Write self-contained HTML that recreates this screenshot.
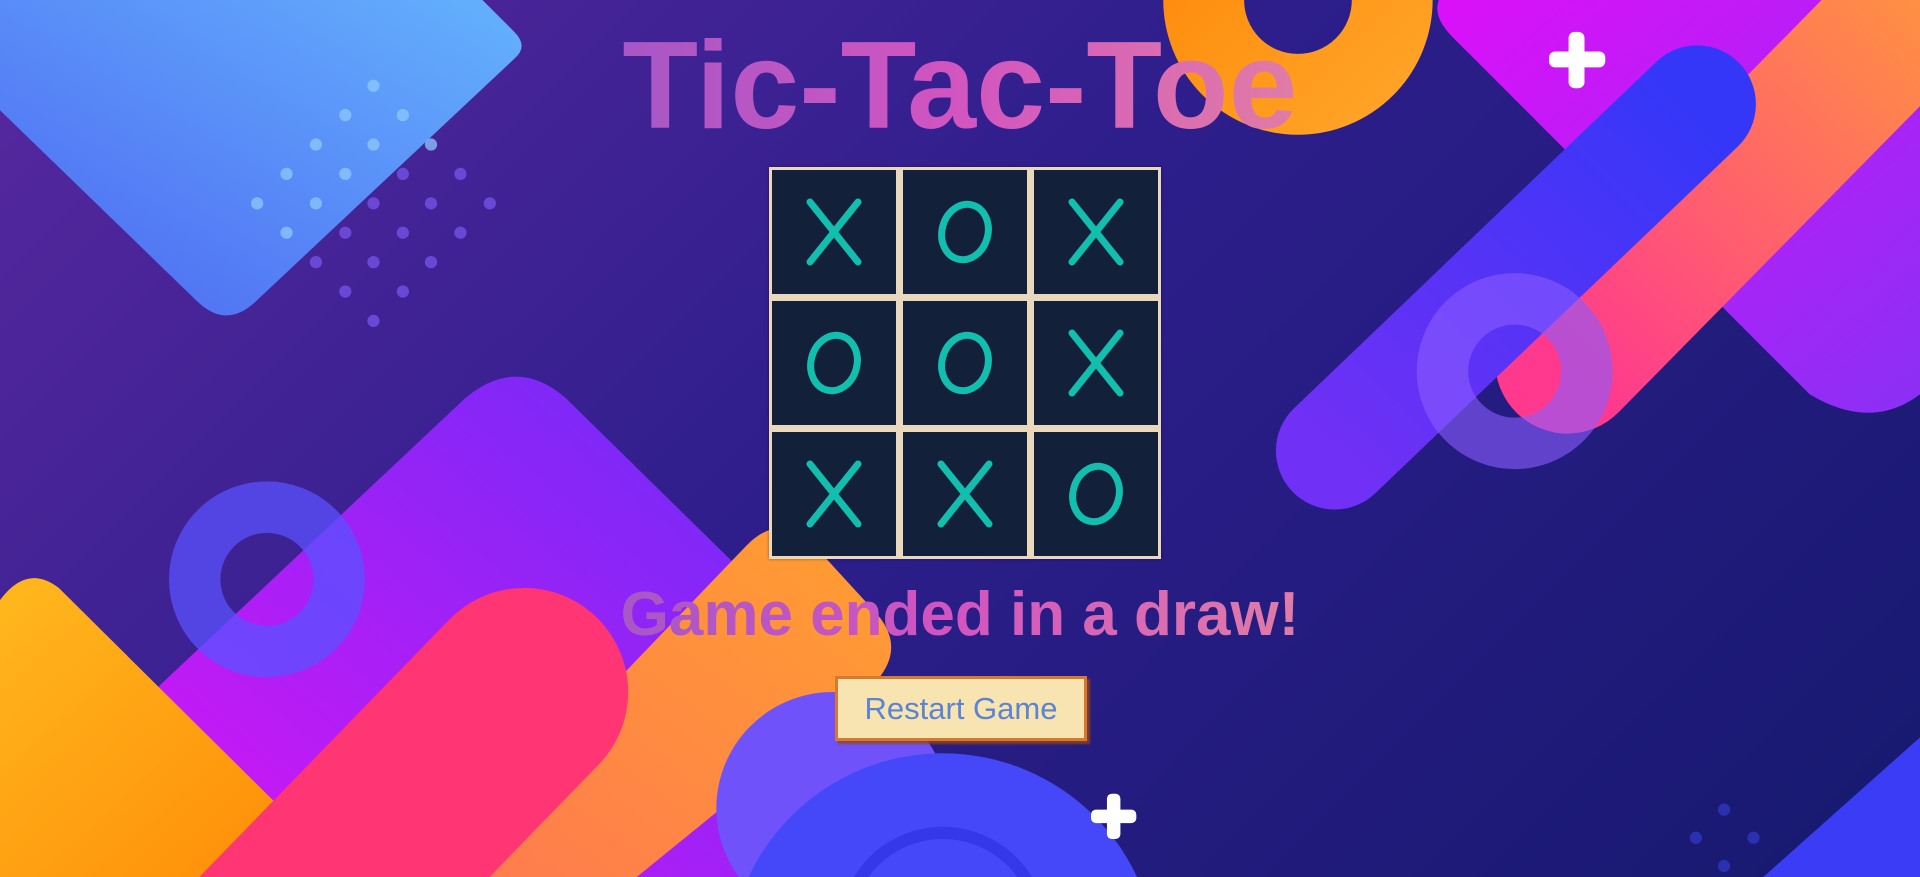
<!DOCTYPE html>
<html><head><meta charset="utf-8"><style>
html,body{margin:0;padding:0;width:1920px;height:877px;overflow:hidden}
body{background:linear-gradient(135deg,#58289f 0%,#2e1e8c 45%,#16196f 100%);font-family:"Liberation Sans",Arial,sans-serif;position:relative}
svg.bg{position:absolute;left:0;top:0;overflow:hidden;display:block}
.title{position:absolute;left:0;width:1920px;top:24px;text-align:center;font-weight:bold;font-size:124px;line-height:124px;letter-spacing:0px}
.title span,.status span{background:linear-gradient(90deg,#a857c6,#d255c0 50%,#e07ca6);-webkit-background-clip:text;background-clip:text;color:transparent}
.board{position:absolute;left:769px;top:167px;width:392px;height:392px;background:#ead8bc;box-sizing:border-box;padding:3px;display:grid;grid-template-columns:124px 124px 124px;grid-template-rows:124px 124px 124px;gap:7px;box-shadow:0 0 3px rgba(0,0,0,.4)}
.c{background:#13203a;display:flex;align-items:center;justify-content:center}
.status{position:absolute;left:0;width:1920px;top:584px;text-align:center;font-weight:bold;font-size:62px;line-height:62px}
.btn{position:absolute;left:835px;top:676px;width:252px;height:65px;box-sizing:border-box;background:#f7e4b0;border:3px solid #d57a2c;box-shadow:3px 3px 2px rgba(150,70,20,.8);color:#5b84d4;font-size:31px;display:flex;align-items:center;justify-content:center}
</style></head><body>
<svg class="bg" width="1920" height="877" viewBox="0 0 1568 716" preserveAspectRatio="none">
<defs>
<linearGradient id="gb" x1="0" y1="1" x2="1" y2="0"><stop offset="0" stop-color="#4d66f2"/><stop offset="1" stop-color="#64b2fd"/></linearGradient>
<linearGradient id="gp" x1="0" y1="1" x2="1" y2="0"><stop offset="0" stop-color="#d416f4"/><stop offset="1" stop-color="#6c2cf8"/></linearGradient>
<linearGradient id="go" x1="0" y1="0" x2="1" y2="1"><stop offset="0" stop-color="#ffb81e"/><stop offset="1" stop-color="#ff8a06"/></linearGradient>
<linearGradient id="go2" x1="0" y1="1" x2="1" y2="0"><stop offset="0" stop-color="#ff7a50"/><stop offset="1" stop-color="#ff9e30"/></linearGradient>
<linearGradient id="gr" x1="0" y1="0" x2="1" y2="1"><stop offset="0" stop-color="#ff8a0a"/><stop offset="1" stop-color="#ffa326"/></linearGradient>
<linearGradient id="gm" x1="0" y1="0" x2="1" y2="1"><stop offset="0" stop-color="#dc10f8"/><stop offset="1" stop-color="#8a30f5"/></linearGradient>
<linearGradient id="gop" x1="1" y1="0" x2="0" y2="1"><stop offset="0" stop-color="#ff9a3a"/><stop offset="1" stop-color="#ff3a8e"/></linearGradient>
<linearGradient id="gbl" x1="1" y1="0" x2="0" y2="1"><stop offset="0" stop-color="#3437f8"/><stop offset="1" stop-color="#7030f5"/></linearGradient>
<clipPath id="cl"><rect x="0" y="0" width="1568" height="716"/></clipPath>
</defs>
<g clip-path="url(#cl)">
<path d="M0 90 L160 245 Q185 270 210 245 L420 48 Q432 38 420 26 L394 0 L0 0 Z" fill="url(#gb)"/>
<g fill="#8ec8ff" opacity=".75">
<circle cx="305" cy="70" r="5"/><circle cx="282" cy="94" r="5"/><circle cx="329" cy="94" r="5"/><circle cx="258" cy="118" r="5"/><circle cx="305" cy="118" r="5"/><circle cx="352" cy="118" r="5"/><circle cx="234" cy="142" r="5"/><circle cx="282" cy="142" r="5"/><circle cx="210" cy="166" r="5"/><circle cx="258" cy="166" r="5"/><circle cx="234" cy="190" r="5"/></g>
<g fill="#6a48d6">
<circle cx="329" cy="142" r="5"/><circle cx="376" cy="142" r="5"/><circle cx="305" cy="166" r="5"/><circle cx="352" cy="166" r="5"/><circle cx="400" cy="166" r="5"/><circle cx="282" cy="190" r="5"/><circle cx="329" cy="190" r="5"/><circle cx="376" cy="190" r="5"/><circle cx="258" cy="214" r="5"/><circle cx="305" cy="214" r="5"/><circle cx="352" cy="214" r="5"/><circle cx="282" cy="238" r="5"/><circle cx="329" cy="238" r="5"/><circle cx="305" cy="262" r="5"/></g>
<path d="M130 560 L380 325 Q422 290 462 325 L620 480 L620 716 L130 716 Z" fill="url(#gp)"/>
<circle cx="218" cy="473" r="59" fill="none" stroke="#5a52ff" stroke-width="42" opacity=".75"/>
<path d="M0 490 Q22 460 48 480 L270 700 L270 716 L0 716 Z" fill="url(#go)"/>
<path d="M350 716 L610 445 Q635 420 660 440 L715 500 Q742 530 712 560 L520 716 Z" fill="url(#go2)"/>
<line x1="428" y1="565" x2="190" y2="810" stroke="#ff3574" stroke-width="170" stroke-linecap="round"/>
<circle cx="680" cy="660" r="95" fill="#6f52fa"/>
<circle cx="770" cy="790" r="175" fill="#4448f8"/>
<circle cx="770" cy="760" r="80" fill="none" stroke="#2a2fe0" stroke-width="10" opacity=".6"/>
<circle cx="1060" cy="0" r="77" fill="none" stroke="url(#gr)" stroke-width="66"/>
<path d="M1175 0 Q1170 14 1186 30 L1478 322 Q1528 352 1568 322 L1568 0 Z" fill="url(#gm)"/>
<line x1="1600" y1="-30" x2="1280" y2="295" stroke="url(#gop)" stroke-width="118" stroke-linecap="round"/>
<line x1="1386" y1="85" x2="1090" y2="368" stroke="url(#gbl)" stroke-width="96" stroke-linecap="round"/>
<circle cx="1237" cy="303" r="59" fill="none" stroke="#8a5cff" stroke-width="42" opacity=".6"/>
<path d="M1440 716 L1568 602 L1568 716 Z" fill="#3a3cf6"/>
<g fill="#2a30b0"><circle cx="1408" cy="661" r="5"/><circle cx="1385" cy="684" r="5"/><circle cx="1432" cy="684" r="5"/><circle cx="1408" cy="707" r="5"/></g>
<g fill="#fff"><rect x="1281" y="26" width="13" height="46" rx="5"/><rect x="1265" y="42" width="46" height="13" rx="5"/>
<rect x="904" y="648" width="11" height="37" rx="4"/><rect x="891" y="661" width="37" height="11" rx="4"/></g>
</g>
</svg>
<div class="title"><span>Tic-Tac-Toe</span></div>
<div class="board">
<div class="c"><svg width="64" height="74"><g stroke="#12bfae" stroke-width="7" stroke-linecap="round"><line x1="8" y1="7" x2="56" y2="67"/><line x1="56" y1="7" x2="8" y2="67"/></g></svg></div>
<div class="c"><svg width="64" height="74"><ellipse cx="32" cy="37" rx="23" ry="28" transform="rotate(15 32 37)" fill="none" stroke="#12bfae" stroke-width="7"/></svg></div>
<div class="c"><svg width="64" height="74"><g stroke="#12bfae" stroke-width="7" stroke-linecap="round"><line x1="8" y1="7" x2="56" y2="67"/><line x1="56" y1="7" x2="8" y2="67"/></g></svg></div>
<div class="c"><svg width="64" height="74"><ellipse cx="32" cy="37" rx="23" ry="28" transform="rotate(15 32 37)" fill="none" stroke="#12bfae" stroke-width="7"/></svg></div>
<div class="c"><svg width="64" height="74"><ellipse cx="32" cy="37" rx="23" ry="28" transform="rotate(15 32 37)" fill="none" stroke="#12bfae" stroke-width="7"/></svg></div>
<div class="c"><svg width="64" height="74"><g stroke="#12bfae" stroke-width="7" stroke-linecap="round"><line x1="8" y1="7" x2="56" y2="67"/><line x1="56" y1="7" x2="8" y2="67"/></g></svg></div>
<div class="c"><svg width="64" height="74"><g stroke="#12bfae" stroke-width="7" stroke-linecap="round"><line x1="8" y1="7" x2="56" y2="67"/><line x1="56" y1="7" x2="8" y2="67"/></g></svg></div>
<div class="c"><svg width="64" height="74"><g stroke="#12bfae" stroke-width="7" stroke-linecap="round"><line x1="8" y1="7" x2="56" y2="67"/><line x1="56" y1="7" x2="8" y2="67"/></g></svg></div>
<div class="c"><svg width="64" height="74"><ellipse cx="32" cy="37" rx="23" ry="28" transform="rotate(15 32 37)" fill="none" stroke="#12bfae" stroke-width="7"/></svg></div>
</div>
<div class="status"><span>Game ended in a draw!</span></div>
<div class="btn">Restart Game</div>
</body></html>
